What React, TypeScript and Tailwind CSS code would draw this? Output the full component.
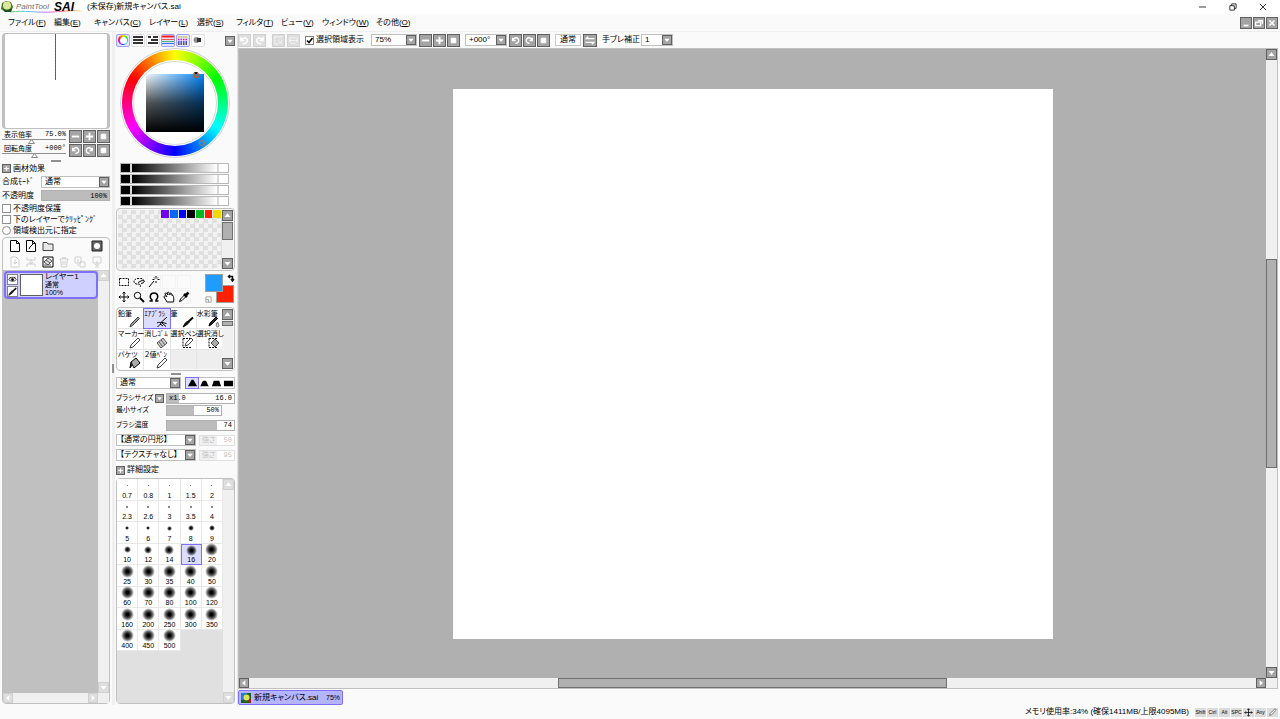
import type { ReactNode } from "react";
import clsx from "clsx";

const menus = [
  { name: "ファイル", key: "F", width: "w-[46px]" },
  { name: "編集", key: "E", width: "w-[40px]" },
  { name: "キャンバス", key: "C", width: "w-[55px]" },
  { name: "レイヤー", key: "L", width: "w-[48px]" },
  { name: "選択", key: "S", width: "w-[39px]" },
  { name: "フィルタ", key: "T", width: "w-[45px]" },
  { name: "ビュー", key: "V", width: "w-[41px]" },
  { name: "ウィンドウ", key: "W", width: "w-[54px]" },
  { name: "その他", key: "O", width: "w-[40px]" },
];

const swatches = ["#7000f0", "#0068f0", "#0000ff", "#000000", "#00b820", "#ff2000", "#f0d800"];

const brushes = [
  { name: "鉛筆", icon: "pencil" },
  { name: "ｴｱﾌﾞﾗｼ", icon: "airbrush" },
  { name: "筆", icon: "brush" },
  { name: "水彩筆", icon: "water" },
  { name: "マーカー", icon: "pen" },
  { name: "消しｺﾞﾑ", icon: "eraser" },
  { name: "選択ペン", icon: "selectPen" },
  { name: "選択消し", icon: "selectErase" },
  { name: "バケツ", icon: "bucket" },
  { name: "２値ﾍﾟﾝ", icon: "pen" },
];

const sizes = [
  0.7, 0.8, 1, 1.5, 2, 2.3, 2.6, 3, 3.5, 4, 5, 6, 7, 8, 9, 10, 12, 14, 16, 20, 25, 30, 35, 40, 50,
  60, 70, 80, 100, 120, 160, 200, 250, 300, 350, 400, 450, 500,
];

// preview dot diameters, the rest are capped at 13px
const dots = [1, 1, 1, 1, 1, 2, 2, 2, 2, 2, 4, 4, 5, 6, 6, 7, 8, 10, 11, 13];

const glyphs: Record<string, ReactNode> = {
  minus: <path d="M2 6h8" strokeWidth="2" />,
  plus: <path d="M2 6h8M6 2v8" strokeWidth="2" />,
  box: <path d="M3.500 3.500h5v5h-5z" fill="currentColor" />,
  down: <path d="M2 4h8L6 9z" fill="currentColor" stroke="none" />,
  up: <path d="M2 8h8L6 3z" fill="currentColor" stroke="none" />,
  left: <path d="M8 2v8L3 6z" fill="currentColor" stroke="none" />,
  right: <path d="M4 2v8l5-4z" fill="currentColor" stroke="none" />,
  ccw: <path d="M3 3v3h3M3.500 6A3 3 0 1 1 6 9" strokeWidth="1.500" />,
  cw: <path d="M9 3v3H6M8.500 6A3 3 0 1 0 6 9" strokeWidth="1.500" />,
  undo: <path d="M2 2v4h4M2.500 5.500C5 2 9 3 9 6S6 9.500 4 9.500" strokeWidth="1.500" />,
  redo: <path d="M10 2v4H6M9.500 5.500C7 2 3 3 3 6s3 3.500 5 3.500" strokeWidth="1.500" />,
  swap: <path d="M11 4H2l2-2M1 8h9L8 10" strokeWidth="1.500" />,
  close: <path d="M3 3l6 6M9 3L3 9" strokeWidth="2" />,
  low: <path d="M3 9h6" strokeWidth="2" />,
  restore: <path d="M2 5h6v4H2zM5 3h5v4" strokeWidth="1.500" />,
  deselect: <path d="M2 2h8M2 2v8h4M6 6l4 4M10 6L6 10" strokeDasharray="2 1" />,
  invert: <path d="M2 6h8M3 3h6M3 9h6M2 3v6M10 3v6" strokeDasharray="2 1" />,
};

const drawings: Record<string, ReactNode> = {
  marquee: <path d="M1.500 2.500h9v7h-9z" strokeDasharray="2 1" />,
  lasso: (
    <>
      <path d="M4 8C1 8 0 5 2 3.500S9 2 10.500 3.500" strokeDasharray="2 1" />
      <path d="M5 6.500l5-2.500 1.500 1L10 7 8 7.500M4.500 8c2 0 4 1 2.500 3" />
    </>
  ),
  wand: <path d="M1 11l5-6M8 0v2M8 5v2M4.500 3.500h2M9.500 3.500h2M10 1.500l-1 1M6 1.500l1 1" />,
  move: <path d="M6 1v10M1 6h10M4.500 2.500L6 1l1.500 1.500M4.500 9.500L6 11l1.500-1.500M2.500 4.500L1 6l1.500 1.500M9.500 4.500L11 6 9.500 7.500" />,
  zoom: (
    <>
      <circle cx="4.500" cy="4.500" r="3.200" />
      <path d="M7 7l4 4" strokeWidth="2" />
    </>
  ),
  rotate: <path d="M1.500 10H4V9C1 6.500 2 2 6 2s5 4.500 2 7v1h2.500" strokeWidth="1.500" />,
  hand: <path d="M4 11L1 6c0-2 2-1 3 0L2 3c0-2 2-1 3 1L4.500 1.500c1-1 2 0 2.500 2.500V2.500c1-1 2 0 2 2V4c2 0 2 5 1.500 7z" fill="#fff" />,
  dropper: (
    <>
      <path d="M1.500 10.500l1-2.500L7 3.500 8.500 5 4 9.500z" fill="#fff" />
      <path d="M6 3l3 3M8 4l2.500-2.500" strokeWidth="2.500" />
    </>
  ),
  pencil: <path d="M1 11l1-3 7-7 1.500 1.500-7 7z" fill="#999" stroke="#444" />,
  pen: <path d="M1 11l1-3 7-7 2 2-7 7z" fill="#fff" stroke="#444" />,
  brush: (
    <>
      <path d="M1 11l2-3.500L5.500 5 7 6.500 4.500 9z" fill="#111" />
      <path d="M6 6l5-4.500" strokeWidth="2" />
    </>
  ),
  airbrush: <path d="M11 1L5 6.500M1 7c2-1.500 3 0 4-.5s3 .5 5.500 1M5 7c-.5 1.500-2 3-3.500 3.500M6 7l4 3.500M4 8l3 2" />,
  water: (
    <>
      <path d="M1 10l1-3 6-6 1.500 1.500-6 6z" fill="#222" />
      <path d="M9.500 6c2 3 1.500 5 0 5s-2-2 0-5z" fill="#ccc" stroke="#777" />
    </>
  ),
  eraser: <path d="M1 6l6-5 4 5-6 5zM3 5l4 5M5 3l4 5" fill="#ccc" stroke="#555" />,
  selectPen: (
    <>
      <path d="M1 1.500h7M1 1.500v9h9" strokeDasharray="2 1" />
      <path d="M3 9l1-3 5-5 2 2-5 5z" fill="#fff" stroke="#444" />
    </>
  ),
  selectErase: (
    <>
      <path d="M1 1.500h8M1 1.500v9h9" strokeDasharray="2 1" />
      <path d="M3 6l4-4 4 4-4 4z" fill="#aaa" stroke="#444" />
    </>
  ),
  bucket: (
    <>
      <path d="M2 5l5-4 4 5-6 5z" fill="#aaa" />
      <path d="M2 5l-1 6 2-3" fill="#222" />
    </>
  ),
  newLayer: <path d="M1.500 .5h6l3 3v8h-9zM7.500 .5v3h3" fill="#fff" />,
  newLinework: <path d="M1.500 .5h6l3 3v8h-9zM7.500 .5v3h3M4 9l1-2 3-3" fill="#fff" />,
  folder: <path d="M1 2.500h4l1 1.500h5v6.500H1z" fill="#e8e8e8" stroke="#444" />,
  mask: (
    <>
      <path d="M1 1h10v10H1z" fill="#666" stroke="#222" />
      <circle cx="6" cy="6" r="3" fill="#fff" stroke="none" />
    </>
  ),
  transfer: <path d="M2 1h5l3 3v7H2zM6 3v5M4 6l2 2 2-2" fill="#fff" />,
  merge: <path d="M2 1v3h8V1M2 11V8h8v3M6 3v5M4 6l2 2 2-2" />,
  clear: (
    <>
      <path d="M1 1h10v10H1z" fill="#fff" />
      <path d="M2 6l4-4 4 3-4 4zM4 4l4 3M2 9h7" fill="#ddd" stroke="#555" />
    </>
  ),
  trash: <path d="M1.500 3h9M4.500 3V1.500h3V3M2.500 3l1 8h5l1-8M5 5v4M7 5v4" />,
  addMask: <path d="M1 1h6v6H1zM6 6h5v5H6zM3 9h2M4 3v3" />,
  applyMask: <path d="M2 1h8v6H2zM6 5v5M4 8l2 2 2-2M4 11h4" />,
  eye: (
    <>
      <path d="M1 6c2-4 8-4 10 0-2 3-8 3-10 0zM2 3l2 1M10 3L8 4" />
      <circle cx="6" cy="6" r="1.500" fill="currentColor" />
    </>
  ),
};

function Drawing({ name, className = "size-3" }: { name: string; className?: string }) {
  return (
    <svg viewBox="0 0 12 12" className={className} fill="none" stroke="currentColor" aria-hidden="true">
      {drawings[name]}
    </svg>
  );
}

function SquareButton({ glyph, label, faded, className = "size-[13px]" }: {
  glyph: string;
  label: string;
  faded?: boolean;
  className?: string;
}) {
  return (
    <button
      type="button"
      aria-label={label}
      className={clsx(
        "flex shrink-0 items-center justify-center border text-white",
        faded ? "border-[#d0d0d0] bg-[#dedede]" : "border-[#606060] bg-[#a4a4a4]",
        className
      )}
    >
      <svg viewBox="0 0 12 12" className="size-full" fill="none" stroke="currentColor" aria-hidden="true">
        {glyphs[glyph]}
      </svg>
    </button>
  );
}

function Dropdown({ label, value, id, className }: { label: string; value: string; id?: string; className?: string }) {
  return (
    <div className={clsx("relative h-3 border border-[#c0c0c0] bg-white", className)}>
      <select id={id} aria-label={label} className="block h-full w-full appearance-none pl-[3px] leading-[10px] outline-none">
        <option>{value}</option>
      </select>
      <span className="pointer-events-none absolute inset-y-0 right-0 flex w-[10px] items-center justify-center border border-[#606060] bg-[#a4a4a4] text-white">
        <svg viewBox="0 0 12 12" className="size-2" aria-hidden="true">{glyphs.down}</svg>
      </span>
    </div>
  );
}

function BarSlider({ label, value, text, prefix, disabled, className }: {
  label: string;
  value: number;
  text: string;
  prefix?: string;
  disabled?: boolean;
  className?: string;
}) {
  const fill = disabled ? "#f0f0f0" : "#bcbcbc";
  return (
    <div className={clsx("relative h-[11px] border", disabled ? "border-[#e0e0e0] text-[#c0c0c0]" : "border-[#b0b0b0]", className)}>
      <input
        type="range"
        aria-label={label}
        defaultValue={value}
        disabled={disabled}
        className="block h-full w-full appearance-none bg-white [&::-webkit-slider-thumb]:opacity-0"
        style={{ backgroundImage: `linear-gradient(to right, ${fill} ${value}%, transparent ${value}%)` }}
      />
      <span className="pointer-events-none absolute inset-0 flex items-center justify-between px-[2px] font-['Liberation_Mono','Noto_Sans_CJK_JP',monospace] text-[7px]">
        <span>{prefix}</span>
        <span>{text}</span>
      </span>
    </div>
  );
}

function ScrollColumn({ faded, thumb }: { faded?: boolean; thumb?: ReactNode }) {
  return (
    <div className="flex w-[11px] shrink-0 flex-col bg-[#f0f0f0]">
      <SquareButton glyph="up" label="上へ" faded={faded} className="size-[11px]" />
      <div className="flex min-h-0 flex-1 flex-col">{thumb}</div>
      <SquareButton glyph="down" label="下へ" faded={faded} className="size-[11px]" />
    </div>
  );
}

function CheckRow({ label, type = "checkbox" }: { label: string; type?: "checkbox" | "radio" }) {
  return (
    <label className="flex h-[11px] items-center gap-[2px] whitespace-nowrap">
      <input
        type={type}
        className={clsx("size-[9px] shrink-0 appearance-none border border-[#909090] bg-white checked:bg-[#606060]", type === "radio" && "rounded-full")}
      />
      {label}
    </label>
  );
}

function NavRow({ label, value, thumb, glyphNames }: { label: string; value: string; thumb: number; glyphNames: string[] }) {
  return (
    <div className="flex h-[14px] items-start">
      <label className="relative mr-[3px] h-[13px] min-w-0 flex-1 text-[7px] leading-[9px]">
        <span className="flex justify-between border-b border-[#909090] pl-[2px]">
          {label}
          <span className="font-['Liberation_Mono',monospace]">{value}</span>
        </span>
        <input type="range" defaultValue={thumb} className="absolute inset-0 w-full opacity-0" />
        <svg viewBox="0 0 7 5" className="absolute top-[9px] h-[5px] w-[7px]" style={{ left: `${thumb}%` }} aria-hidden="true">
          <path d="M3.500 .5L6.500 4.500h-6z" fill="#fff" stroke="#888" />
        </svg>
      </label>
      <div className="flex gap-px">
        {glyphNames.map((g) => (
          <SquareButton key={g} glyph={g} label={`${label} ${g}`} />
        ))}
      </div>
    </div>
  );
}

function TitleBar() {
  return (
    <header className="flex h-[14px] shrink-0 items-center bg-white">
      <svg viewBox="0 0 84 14" className="h-[14px] w-[84px]" aria-label="PaintTool SAI">
        <defs>
          <linearGradient id="rainbow" gradientUnits="userSpaceOnUse" x1="10" y1="0" x2="82" y2="0">
            <stop offset="0" stopColor="#60d060" />
            <stop offset=".3" stopColor="#60c0ff" />
            <stop offset=".5" stopColor="#c070ff" />
            <stop offset=".75" stopColor="#ff7070" />
            <stop offset="1" stopColor="#ffe080" />
          </linearGradient>
        </defs>
        <path d="M10 12C25 10 35 13 52 12s20-2 30-1" fill="none" stroke="url(#rainbow)" />
        <path d="M2 3l4-2 5 1 2 5-2 5H5L1 9z" fill="#408020" />
        <circle cx="7" cy="5.500" r="4" fill="#e0e8a0" />
        <path d="M3 9c3 2 6 1 9-1l-1 4H5z" fill="#205020" />
        <text x="16" y="9" className="fill-[#707070] font-['Liberation_Sans',sans-serif] text-[8px] italic">PaintTool</text>
        <text x="54" y="11" className="fill-black font-['Liberation_Sans',sans-serif] text-[12px] font-bold italic">SAI</text>
      </svg>
      <h1 className="ml-[3px] flex-1">(未保存)新規キャンバス.sai</h1>
      <div className="flex gap-[22px] pr-[13px]">
        {["M0 4.500h8", "M1 3h5v5H1zM3 3V1h5v5H6", "M1 1l7 7M8 1L1 8"].map((d, i) => (
          <button key={d} type="button" aria-label={["最小化", "元に戻す", "閉じる"][i]}>
            <svg viewBox="0 0 9 9" className="size-2" fill="none" stroke="#222">
              <path d={d} />
            </svg>
          </button>
        ))}
      </div>
    </header>
  );
}

function MenuBar() {
  return (
    <nav className="flex h-[18px] shrink-0 items-center border-b border-[#eeeeee] pl-2">
      {menus.map((m) => (
        <button key={m.key} type="button" className={clsx("shrink-0 text-left whitespace-nowrap", m.width)}>
          {m.name}(<u>{m.key}</u>)
        </button>
      ))}
      <div className="ml-auto flex gap-px pr-[2px]">
        <SquareButton glyph="low" label="最小化" className="size-3" />
        <SquareButton glyph="restore" label="元のサイズ" className="size-3" />
        <SquareButton glyph="close" label="閉じる" className="size-3" />
      </div>
    </nav>
  );
}

function SectionToggle({ label, className }: { label: string; className?: string }) {
  return (
    <div className={clsx("flex items-center gap-[2px]", className)}>
      <SquareButton glyph="plus" label={label} className="size-[9px]" />
      <span>{label}</span>
    </div>
  );
}

function LayerPanel() {
  return (
    <aside className="flex w-28 shrink-0 flex-col px-[2px] py-px">
      <div className="h-24 shrink-0 rounded-sm border-x-[3px] border-y border-[#c0c0c0] bg-white">
        <div className="ml-[50px] h-[46px] w-px bg-[repeating-linear-gradient(to_bottom,#ff2040_0_2px,#704858_2px_3px)]" />
      </div>
      <div className="mt-px">
        <NavRow label="表示倍率" value="75.0%" thumb={40} glyphNames={["minus", "plus", "box"]} />
        <NavRow label="回転角度" value="+000°" thumb={46} glyphNames={["ccw", "cw", "box"]} />
      </div>
      <div className="flex h-[5px] items-center justify-center">
        <div className="h-[2px] w-[10px] bg-[#909090]" />
      </div>
      <SectionToggle label="画材効果" className="h-[11px]" />
      <div className="mt-px flex h-[14px] items-center">
        <span className="w-[39px] shrink-0 whitespace-nowrap">合成ﾓｰﾄﾞ</span>
        <Dropdown label="合成モード" value="通常" className="flex-1" />
      </div>
      <div className="flex h-[13px] items-center">
        <span className="w-[39px] shrink-0">不透明度</span>
        <BarSlider label="不透明度" value={100} text="100%" className="flex-1" />
      </div>
      <div className="mt-px">
        <CheckRow label="不透明度保護" />
        <CheckRow label="下のレイヤーでｸﾘｯﾋﾟﾝｸﾞ" />
        <CheckRow label="領域検出元に指定" type="radio" />
      </div>

      <div className="mt-px flex min-h-0 flex-1 flex-col rounded-sm border border-[#c0c0c0]">
        <div className="grid h-8 shrink-0 grid-cols-6 place-items-center px-1">
          {["newLayer", "newLinework", "folder", "", "", "mask"].map((n, i) =>
            n ? (
              <button key={n} type="button" aria-label={n}><Drawing name={n} /></button>
            ) : (
              <span key={i} />
            )
          )}
          {["transfer", "merge", "clear", "trash", "addMask", "applyMask"].map((n) => (
            <button key={n} type="button" aria-label={n} className={n === "clear" ? "" : "text-[#d0d0d0]"}>
              <Drawing name={n} />
            </button>
          ))}
        </div>
        <div className="flex min-h-0 flex-1">
          <div className="min-w-0 flex-1 bg-[#c0c0c0] pt-px pl-px">
            <div className="flex h-7 items-center gap-[2px] rounded-sm border-2 border-[#8070f8] bg-[#d0d0ff] pl-px">
              <div className="flex flex-col gap-px">
                <button type="button" aria-label="表示" className="border border-[#808080] bg-white"><Drawing name="eye" className="size-[9px]" /></button>
                <button type="button" aria-label="編集対象" className="border border-[#808080] bg-white"><Drawing name="brush" className="size-[9px]" /></button>
              </div>
              <div className="h-[22px] w-[23px] border border-[#606060] bg-white" />
              <div className="text-[8px] leading-[8px] whitespace-nowrap">
                <p>レイヤー1</p>
                <p className="text-[7px]">通常</p>
                <p className="text-[7px]">100%</p>
              </div>
            </div>
          </div>
          <ScrollColumn faded />
        </div>
        <div className="flex h-[10px] shrink-0 bg-[#f0f0f0] pr-[11px]">
          <SquareButton glyph="left" label="左へ" faded className="size-[10px]" />
          <div className="flex-1" />
          <SquareButton glyph="right" label="右へ" faded className="size-[10px]" />
        </div>
      </div>
    </aside>
  );
}

function ColorModes() {
  const box = "flex h-[13px] w-[14px] items-center justify-center rounded-xs border";
  const on = "border-[#a0a0ff] bg-[#e4e4ff]";
  const off = "border-[#e0e0e0] bg-white";
  return (
    <div className="flex h-[14px] items-center gap-px">
      <button type="button" aria-label="カラーサークル" className={clsx(box, on)}>
        <span className="flex size-[10px] items-center justify-center rounded-full bg-[conic-gradient(#ffe000,#00e000,#00e0ff,#0040ff,#ff00ff,#ff2000,#ffe000)]">
          <span className="size-[7px] rounded-full bg-white" />
        </span>
      </button>
      <button type="button" aria-label="RGBスライダ" className={clsx(box, off)}>
        <svg viewBox="0 0 12 10" className="h-[10px] w-3" stroke="#333" strokeWidth="2"><path d="M1 2h10M1 5h10M1 8h10" /></svg>
      </button>
      <button type="button" aria-label="HSVスライダ" className={clsx(box, off)}>
        <svg viewBox="0 0 12 10" className="h-[10px] w-3" stroke="#333" strokeWidth="2"><path d="M1 2h3M6 2h5M4 5h7M1 8h10" /></svg>
      </button>
      <button type="button" aria-label="中間色バー" className={clsx(box, on)}>
        <svg viewBox="0 0 12 10" className="h-[10px] w-3">
          <path d="M0 1.500h12" stroke="#ff2020" strokeWidth="2" />
          <path d="M0 4.500h12" stroke="#f05050" />
          <path d="M0 6.500h12" stroke="#40b080" />
          <path d="M0 8.500h12" stroke="#3070ff" />
        </svg>
      </button>
      <button type="button" aria-label="スウォッチ" className={clsx(box, on)}>
        <svg viewBox="0 0 12 10" className="h-[10px] w-3" strokeWidth="1.500" strokeDasharray="1.500 1">
          <path d="M1 2h10" stroke="#d0c020" />
          <path d="M1 4.500h10" stroke="#d02090" />
          <path d="M1 7h10" stroke="#2020d0" />
          <path d="M1 9h10" stroke="#222" />
        </svg>
      </button>
      <button type="button" aria-label="スクラッチパッド" className={clsx(box, off)}>
        <svg viewBox="0 0 12 10" className="h-[10px] w-3"><circle cx="4.500" cy="5" r="3" fill="#909090" /><path d="M5 3h4v4H5z" fill="#333" /></svg>
      </button>
      <SquareButton glyph="down" label="パネル設定" className="mt-[2px] ml-auto size-[10px]" />
    </div>
  );
}

function ColorWheel() {
  return (
    <div className="mt-px ml-1 flex size-[110px] shrink-0 items-center justify-center rounded-full border border-[#d0d0d0] bg-white">
      <div className="relative flex size-[106px] items-center justify-center rounded-full bg-[conic-gradient(#ffff00,#00ff00,#00ffff,#0000ff,#ff00ff,#ff0000,#ffff00)]">
        <div className="flex size-[86px] items-center justify-center rounded-full bg-white">
          <div className="flex size-[84px] items-center justify-center rounded-full border border-[#d8d8d8]">
            <div className="size-[58px] bg-[linear-gradient(to_top,#000,#000000a8_50%,transparent),linear-gradient(to_right,#f4f8fa,#0084f8)]" />
          </div>
        </div>
        <span className="absolute top-[22px] left-[71px] size-[6px] rounded-full border-2 border-[#c06020] border-t-black" />
        <span className="absolute top-[90px] left-[77px] size-[6px] rounded-full border border-[#d07030]" />
      </div>
    </div>
  );
}

function ColorSection() {
  return (
    <>
      <ColorModes />
      <ColorWheel />
      <div className="mt-[5px] flex flex-col gap-px pr-[6px] pl-1">
        {[1, 2, 3, 4].map((n) => (
          <div key={n} className="flex h-[10px] gap-[2px] border border-[#b8b8b8] bg-[#d8d8d8]">
            <button type="button" aria-label={`中間色${n} 左`} className="w-[9px] bg-black" />
            <div className="flex-1 bg-[linear-gradient(to_right,#000,#fff)]" />
            <button type="button" aria-label={`中間色${n} 右`} className="w-[9px] bg-white" />
          </div>
        ))}
      </div>
      <div className="mt-[2px] flex h-[63px] shrink-0 rounded-sm border border-[#c0c0c0] p-px">
        <div className="grid flex-1 grid-cols-12 content-start bg-[conic-gradient(#e0e0e0_25%,#f2f2f2_0_50%,#e0e0e0_0_75%,#f2f2f2_0)] bg-[length:9px_9px]">
          {swatches.map((c) => (
            <button key={c} type="button" aria-label={c} className="h-2 border-r border-[#e8e8e8] first:col-start-6" style={{ backgroundColor: c }} />
          ))}
        </div>
        <ScrollColumn thumb={<div className="mt-px h-[18px] border border-[#707070] bg-[#b0b0b0]" />} />
      </div>
    </>
  );
}

function ToolSection() {
  const tools = ["marquee", "lasso", "wand", "", "", "move", "zoom", "rotate", "hand", "dropper"];
  return (
    <div className="mt-[3px] flex h-[30px] shrink-0 justify-between pl-px">
      <div className="mt-px grid w-[74px] grid-cols-5 grid-rows-2 place-items-center">
        {tools.map((t, i) => (
          <button key={i} type="button" aria-label={t || "空き"} className="flex size-[14px] items-center justify-center border border-[#f2f2f2]">
            {t && <Drawing name={t} />}
          </button>
        ))}
      </div>
      {/* foreground / background colours overlap */}
      <div className="relative h-full w-[30px]">
        <button type="button" aria-label="背景色" className="absolute right-px bottom-px size-[18px] border border-[#a0a0a0] bg-[#ff2000]" />
        <button type="button" aria-label="描画色" className="absolute top-0 left-0 size-[18px] border border-[#a0a0a0] bg-[#209cff]" />
        <svg viewBox="0 0 8 8" className="absolute top-0 right-0 size-2" fill="none" stroke="#111" strokeWidth="1.500" aria-hidden="true">
          <path d="M3 1L1.500 2.500 3 4M1.500 2.500h4V6M4 5l1.500 2L7 5" />
        </svg>
        <svg viewBox="0 0 8 8" className="absolute bottom-px left-0 size-[7px]" fill="#fff" stroke="#999" aria-hidden="true">
          <path d="M1 1h6v6H1zM1 4h3v3" />
        </svg>
      </div>
    </div>
  );
}

function BrushPalette() {
  return (
    <div className="mt-[3px] flex h-16 shrink-0 rounded-sm border border-[#c0c0c0] p-px">
      <div className="grid min-w-0 flex-1 grid-cols-4 grid-rows-3 gap-px bg-[#e4e4e4]">
        {brushes.map((b, i) => (
          <button
            key={b.name}
            type="button"
            className={clsx(
              "relative flex min-w-0 flex-col text-left text-[7px] leading-[9px] whitespace-nowrap",
              i === 1 ? "bg-[#dcdcff] outline outline-[#8070f8]" : "bg-white"
            )}
          >
            {b.name}
            <span className="absolute right-[2px] bottom-0">
              <Drawing name={b.icon} />
            </span>
          </button>
        ))}
        <div className="bg-[#eeeeee]" />
        <div className="bg-[#eeeeee]" />
      </div>
      <ScrollColumn thumb={<div className="mt-px h-[5px] border border-[#707070] bg-[#b0b0b0]" />} />
    </div>
  );
}

function BrushSettings() {
  const tips = ["M1 9L5 2h2l4 7z", "M1 9c2-1 2-6 4-6h2c2 0 2 5 4 6z", "M1 9l2-6h6l2 6z", "M1 3h10v6H1z"];
  return (
    <>
      <div className="flex h-[6px] items-center justify-center">
        <div className="h-[2px] w-[10px] bg-[#909090]" />
      </div>
      <div className="flex h-3 items-center justify-between">
        <Dropdown label="描画モード" value="通常" className="w-[65px]" />
        <div className="flex h-3 w-[50px] border border-[#c0c0c0] bg-white">
          {tips.map((d, i) => (
            <button key={d} type="button" aria-label={`ブラシ形状${i + 1}`} className={clsx("flex flex-1 items-center justify-center", i === 0 && "bg-[#dcdcff] outline outline-[#8070f8]")}>
              <svg viewBox="0 0 12 12" className="size-[11px]"><path d={d} /></svg>
            </button>
          ))}
        </div>
      </div>
      <div className="mt-[3px] flex h-3 items-center">
        <span className="w-[39px] text-[7px] whitespace-nowrap">ブラシサイズ</span>
        <SquareButton glyph="down" label="サイズ単位" className="mr-[2px] size-[9px]" />
        <BarSlider label="ブラシサイズ" value={18} prefix="x1.0" text="16.0" className="flex-1" />
      </div>
      <div className="flex h-3 items-center">
        <span className="w-[50px] text-[7px]">最小サイズ</span>
        <BarSlider label="最小サイズ" value={50} text="50%" className="mr-[13px] flex-1" />
      </div>
      <div className="mt-[3px] flex h-3 items-center">
        <span className="w-[50px] text-[7px]">ブラシ濃度</span>
        <BarSlider label="ブラシ濃度" value={74} text="74" className="flex-1" />
      </div>
      <div className="mt-[3px] flex h-3 items-center gap-[3px]">
        <Dropdown label="ブラシ形状" value="【通常の円形】" className="w-20" />
        <BarSlider label="形状の強さ" value={50} prefix="強さ" text="50" disabled className="flex-1" />
      </div>
      <div className="mt-[3px] flex h-3 items-center gap-[3px]">
        <Dropdown label="テクスチャ" value="【テクスチャなし】" className="w-20" />
        <BarSlider label="テクスチャの強さ" value={50} prefix="強さ" text="95" disabled className="flex-1" />
      </div>
      <SectionToggle label="詳細設定" className="mt-[3px] h-3" />
    </>
  );
}

function SizeGrid() {
  return (
    <div className="mt-[2px] flex min-h-0 flex-1 rounded-sm border border-[#c0c0c0]">
      <div className="min-w-0 flex-1 bg-[#e0e0e0]">
        <div className="grid h-[172px] grid-cols-5 grid-rows-8">
          {sizes.map((s, i) => {
            const dot = dots[i] ?? 13;
            return (
              <button
                key={s}
                type="button"
                className={clsx(
                  "flex min-h-0 flex-col items-center border-r border-b text-[7px] leading-[8px]",
                  s === 16 ? "border border-[#8070f8] bg-[#dcdcff]" : "border-[#e8e8e8] bg-white"
                )}
              >
                <span className="flex min-h-0 flex-1 items-center">
                  <span
                    className={clsx("shrink-0 rounded-full", i < 10 ? "bg-[#606060]" : "bg-[radial-gradient(closest-side,#000_20%,#000000a0_60%,transparent)]")}
                    style={{ width: dot, height: dot }}
                  />
                </span>
                <span className="font-['Liberation_Sans',sans-serif]">{s}</span>
              </button>
            );
          })}
        </div>
      </div>
      <ScrollColumn faded />
    </div>
  );
}

function Toolbar() {
  return (
    <div className="flex h-[14px] shrink-0 items-center">
      <div className="flex gap-[2px]">
        <SquareButton glyph="undo" label="元に戻す" faded />
        <SquareButton glyph="redo" label="やり直し" faded />
      </div>
      <div className="ml-[6px] flex gap-[2px]">
        <SquareButton glyph="deselect" label="選択解除" faded />
        <SquareButton glyph="invert" label="選択反転" faded />
      </div>
      <label className="ml-[5px] flex w-[66px] items-center gap-[2px] whitespace-nowrap">
        <span className="relative flex">
          <input type="checkbox" defaultChecked className="peer size-[9px] appearance-none border border-[#808080] bg-white" />
          <svg viewBox="0 0 9 9" className="pointer-events-none absolute inset-0 hidden size-[9px] peer-checked:block" fill="none" stroke="#000" strokeWidth="1.500">
            <path d="M2 4.500l2 2L7.500 2" />
          </svg>
        </span>
        選択領域表示
      </label>
      <Dropdown label="表示倍率" value="75%" className="w-[46px]" />
      <div className="ml-[2px] flex gap-px">
        <SquareButton glyph="minus" label="縮小" />
        <SquareButton glyph="plus" label="拡大" />
        <SquareButton glyph="box" label="倍率リセット" />
      </div>
      <Dropdown label="回転角度" value="+000°" className="ml-[5px] w-[42px]" />
      <div className="ml-[2px] flex gap-px">
        <SquareButton glyph="ccw" label="左回転" />
        <SquareButton glyph="cw" label="右回転" />
        <SquareButton glyph="box" label="回転リセット" />
      </div>
      <button type="button" className="ml-[5px] h-3 w-[26px] border border-[#c8c8c8] bg-white leading-[10px]">通常</button>
      <SquareButton glyph="swap" label="左右反転" className="ml-[2px] h-[13px] w-[14px]" />
      <label htmlFor="stabilizer" className="ml-[5px] w-[39px] whitespace-nowrap">手ブレ補正</label>
      <Dropdown id="stabilizer" label="手ブレ補正" value="1" className="w-8" />
    </div>
  );
}

function Workspace() {
  return (
    <main className="flex min-w-0 flex-1 flex-col pt-px pr-[2px]">
      <Toolbar />
      <div className="mt-px flex min-h-0 flex-1 flex-col border border-[#c0c0c0]">
        <div className="flex min-h-0 flex-1">
          <div className="flex min-w-0 flex-1 items-center justify-center bg-[#b0b0b0]">
            <div className="h-[550px] w-[600px] shrink-0 bg-white" />
          </div>
          <ScrollColumn
            thumb={
              <>
                <div className="flex-[200]" />
                <div className="flex-[208] border border-[#707070] bg-[#b0b0b0]" />
                <div className="flex-[200]" />
              </>
            }
          />
        </div>
        <div className="flex h-[10px] shrink-0 bg-[#f0f0f0] pr-[11px]">
          <SquareButton glyph="left" label="左へ" className="size-[10px]" />
          <div className="flex-[310]" />
          <div className="flex-[387] border border-[#707070] bg-[#b0b0b0]" />
          <div className="flex-[310]" />
          <SquareButton glyph="right" label="右へ" className="size-[10px]" />
        </div>
      </div>
      <button type="button" className="mt-px flex h-[15px] w-[105px] shrink-0 items-center gap-[3px] rounded-xs border border-[#8070f8] bg-[#b4b4ff] px-[2px] text-[8px]">
        <svg viewBox="0 0 10 10" className="size-[10px]" aria-hidden="true">
          <path d="M0 0h10v10H0z" fill="#206020" />
          <path d="M0 0h6L3 7H0z" fill="#2080c0" />
          <circle cx="5.500" cy="4.500" r="3" fill="#e0e060" />
          <path d="M6 8l4-2v4z" fill="#a02020" />
        </svg>
        <span>新規キャンバス.sai</span>
        <span className="ml-auto text-[7px]">75%</span>
      </button>
    </main>
  );
}

function StatusBar() {
  return (
    <footer className="flex h-[14px] shrink-0 items-center justify-end gap-[6px] pr-[2px]">
      <span>メモリ使用率:34% (確保1411MB/上限4095MB)</span>
      <div className="flex gap-px text-[5px] leading-[9px]">
        {["Shift", "Ctrl", "Alt", "SPC"].map((k) => (
          <kbd key={k} className="w-[11px] bg-[#dcdcdc] text-center font-['Liberation_Sans',sans-serif]">{k}</kbd>
        ))}
        <span className="flex w-[11px] items-center justify-center bg-[#dcdcdc]"><Drawing name="move" className="size-[9px]" /></span>
        <kbd className="w-[11px] bg-[#dcdcdc] text-center font-['Liberation_Sans',sans-serif]">Any</kbd>
        <span className="flex w-[11px] items-center justify-center bg-[#dcdcdc]"><Drawing name="pen" className="size-2" /></span>
      </div>
    </footer>
  );
}

export default function App() {
  return (
    <div className="flex h-screen flex-col overflow-hidden bg-[#fafafa] font-['Liberation_Sans','Noto_Sans_CJK_JP',sans-serif] text-[8px] leading-[10px] text-black [font-feature-settings:'palt']">
      <TitleBar />
      <MenuBar />
      <div className="flex min-h-0 flex-1">
        <LayerPanel />
        <div className="flex w-[3px] shrink-0 items-center bg-[#f0f0f0]">
          <div className="h-[9px] w-[2px] bg-[#909090]" />
        </div>
        <section className="flex w-[122px] shrink-0 flex-col py-px pr-[2px] pl-px">
          <ColorSection />
          <ToolSection />
          <BrushPalette />
          <BrushSettings />
          <SizeGrid />
        </section>
        <div className="w-px shrink-0 bg-[#e0e0e0]" />
        <Workspace />
      </div>
      <StatusBar />
    </div>
  );
}
